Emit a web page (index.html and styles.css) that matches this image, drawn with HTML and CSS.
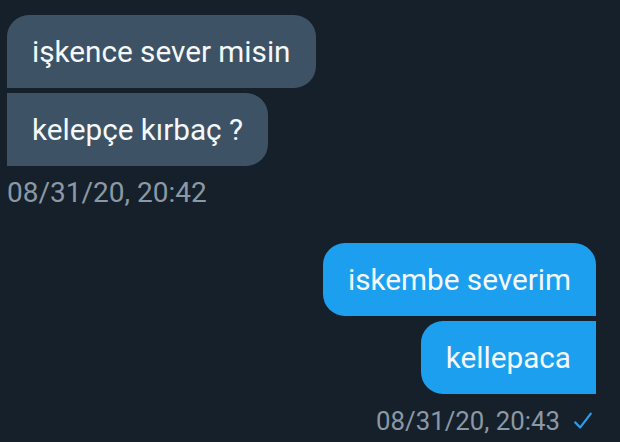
FILE: index.html
```html
<!DOCTYPE html>
<html>
<head>
<meta charset="utf-8">
<link rel="stylesheet" href="styles.css">
</head>
<body>
<div class="chat">
  <div class="group in">
    <div class="bubble first">işkence sever misin</div>
    <div class="bubble last">kelepçe kırbaç ?</div>
    <div class="time">08/31/20, 20:42</div>
  </div>
  <div class="group out">
    <div class="bubble first">iskembe severim</div>
    <div class="bubble last">kellepaca</div>
    <div class="time">08/31/20, 20:43
      <svg class="check" viewBox="0 0 24 24" width="22" height="22"><path d="M3.5 13.5 L9 19 L20.5 4" fill="none" stroke="#2a9df0" stroke-width="2.4" stroke-linecap="round" stroke-linejoin="round"/></svg>
    </div>
  </div>
</div>
</body>
</html>
```
FILE: styles.css
```css
html, body {
  margin: 0;
  padding: 0;
  background: #16202b;
  height: 100%;
}
.chat {
  display: flex;
  flex-direction: column;
  padding: 15px 24px 0 7px;
  font-family: Roboto, "Noto Sans", sans-serif;
}
.group {
  display: flex;
  flex-direction: column;
  gap: 5px;
}
.group.in { align-items: flex-start; }
.group.out { align-items: flex-end; margin-top: 34px; }
.bubble {
  font-size: 29.7px;
  line-height: 35px;
  padding: 19px 25px;
  color: #f5f8fa;
  border-radius: 22px;
}
.in .bubble { background: #3d5365; }
.out .bubble { background: #1d9ff0; }
.in .first { border-bottom-left-radius: 0; }
.in .last { border-top-left-radius: 0; border-bottom-left-radius: 0; }
.out .first { border-bottom-right-radius: 0; }
.out .last { border-top-right-radius: 0; border-bottom-right-radius: 0; }
.time {
  color: #8b98a5;
  font-size: 28px;
  line-height: 32px;
  margin-top: 6px;
  display: flex;
  align-items: center;
  gap: 12px;
}
.out .time { margin-right: 2px; font-size: 25.8px; }
```
